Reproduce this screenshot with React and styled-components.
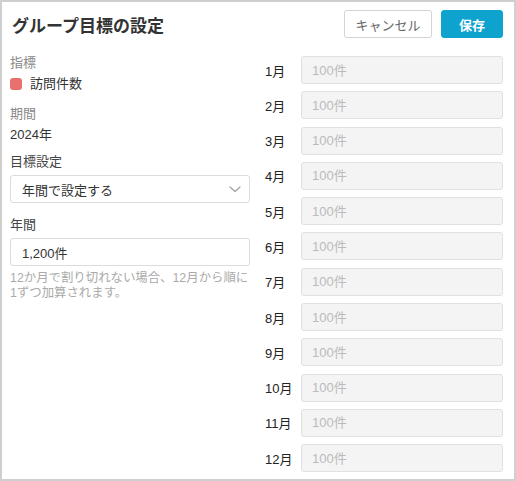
import React from 'react'
import styled, { createGlobalStyle } from 'styled-components'

const GlobalStyle = createGlobalStyle`
  html, body {
    margin: 0;
    padding: 0;
    background: #fff;
  }
  body {
    font-family: "Liberation Sans", "Noto Sans CJK JP", sans-serif;
    color: #333;
  }
`

const Frame = styled.div`
  box-sizing: border-box;
  width: 516px;
  height: 481px;
  border: 2px solid #cfcfcf;
  padding: 8px 11px 0 8px;
  background: #fff;
`

const Header = styled.div`
  display: flex;
  align-items: center;
  justify-content: space-between;
  height: 28px;
  margin-bottom: 18px;
`

const Title = styled.h1`
  margin: 0 0 0 2px;
  font-size: 17px;
  font-weight: 700;
  color: #333;
`

const Actions = styled.div`
  display: flex;
  gap: 9px;
`

const Button = styled.button`
  box-sizing: border-box;
  height: 28px;
  width: ${p => (p.primary ? '62px' : '88px')};
  border-radius: 3px;
  border: 1px solid ${p => (p.primary ? '#0ea2cf' : '#d4d4d4')};
  background: ${p => (p.primary ? '#0ea2cf' : '#fff')};
  color: ${p => (p.primary ? '#fff' : '#666')};
  font-family: inherit;
  font-size: 13px;
  font-weight: ${p => (p.primary ? 700 : 400)};
  padding: 0;
`

const Body = styled.div`
  display: grid;
  grid-template-columns: 240px 1fr;
  column-gap: 15px;
`

const Left = styled.div`
  display: flex;
  flex-direction: column;
`

const Field = styled.div`
  margin-bottom: ${p => p.gap || 0}px;
`

const Label = styled.div`
  font-size: 13px;
  line-height: 14px;
  color: ${p => (p.dark ? '#444' : '#888')};
  margin-bottom: ${p => (p.dark ? 6 : 5)}px;
`

const Value = styled.div`
  display: flex;
  align-items: center;
  gap: 8px;
  font-size: 13px;
  line-height: 18px;
  color: #333;
`

const Swatch = styled.span`
  width: 12px;
  height: 12px;
  border-radius: 3px;
  background: #e8716d;
`

const Box = styled.div`
  box-sizing: border-box;
  height: 28px;
  display: flex;
  align-items: center;
  justify-content: space-between;
  padding: 0 8px 0 11px;
  border: 1px solid #dcdcdc;
  border-radius: 3px;
  background: #fff;
  font-size: 13px;
  color: #333;
`

const Help = styled.p`
  margin: 5px 0 0;
  font-size: 12.4px;
  line-height: 15px;
  color: #aaa;
  white-space: nowrap;
`

const Months = styled.div`
  display: flex;
  flex-direction: column;
  gap: 7.3px;
`

const MonthRow = styled.div`
  display: flex;
  align-items: center;
  height: 28px;
`

const MonthLabel = styled.span`
  width: 36px;
  font-size: 13px;
  color: #222;
`

const MonthInput = styled.input`
  flex: 1;
  box-sizing: border-box;
  height: 28px;
  border: 1px solid #e0e0e0;
  border-radius: 3px;
  background: #f4f4f4;
  padding: 0 10px;
  font-family: inherit;
  font-size: 13px;
  color: #333;
  outline: none;
  &::placeholder {
    color: #bbb;
  }
`

const Chevron = () => (
  <svg width="12" height="7" viewBox="0 0 12 7" fill="none">
    <path d="M1 1l5 4.5L11 1" stroke="#a0a0a0" strokeWidth="1.2" strokeLinecap="round" strokeLinejoin="round" />
  </svg>
)

const months = Array.from({ length: 12 }, (_, i) => `${i + 1}月`)

const App = () => (
  <>
    <GlobalStyle />
    <Frame>
      <Header>
        <Title>グループ目標の設定</Title>
        <Actions>
          <Button>キャンセル</Button>
          <Button primary>保存</Button>
        </Actions>
      </Header>
      <Body>
        <Left>
          <Field gap={14}>
            <Label>指標</Label>
            <Value>
              <Swatch />
              訪問件数
            </Value>
          </Field>
          <Field gap={11}>
            <Label>期間</Label>
            <Value>2024年</Value>
          </Field>
          <Field gap={15}>
            <Label dark>目標設定</Label>
            <Box>
              年間で設定する
              <Chevron />
            </Box>
          </Field>
          <Field>
            <Label dark>年間</Label>
            <Box>1,200件</Box>
            <Help>
              12か月で割り切れない場合、12月から順に
              <br />
              1ずつ加算されます。
            </Help>
          </Field>
        </Left>
        <Months>
          {months.map(m => (
            <MonthRow key={m}>
              <MonthLabel>{m}</MonthLabel>
              <MonthInput placeholder="100件" readOnly />
            </MonthRow>
          ))}
        </Months>
      </Body>
    </Frame>
  </>
)

export default App
